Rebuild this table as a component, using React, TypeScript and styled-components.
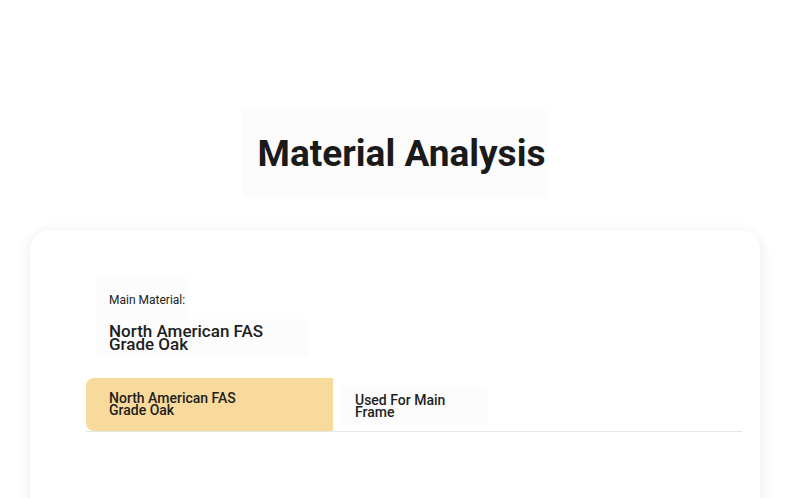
import styled, { createGlobalStyle } from "styled-components";

const Global = createGlobalStyle`
  html, body { margin: 0; padding: 0; background: #fff; }
  body { font-family: Roboto, "Liberation Sans", sans-serif; color: #1a1a1a; }
`;

const Page = styled.div`
  width: 790px;
  height: 498px;
  overflow: hidden;
  padding-top: 110px;
  box-sizing: border-box;
`;

const TitleWrap = styled.div`
  display: flex;
  justify-content: center;
`;

const Title = styled.h1`
  margin: 0;
  padding: 21px 3px 21px 16px;
  background: #fcfcfc;
  font-size: 37px;
  font-weight: 700;
  line-height: 46px;
  color: #1a1a1a;
`;

const Card = styled.div`
  margin: 32px 30px 0;
  background: #fff;
  border-radius: 20px;
  box-shadow: 0 2px 14px rgba(0, 0, 0, 0.09);
  padding: 47px 18px 120px 56px;
`;

const Info = styled.div`
  display: flex;
  flex-direction: column;
  align-items: flex-start;
  margin-left: 10px;
`;

const Label = styled.div`
  background: #fcfcfc;
  padding: 16px 2px 11px 13px;
  font-size: 12px;
  line-height: 14px;
  color: #222;
`;

const Value = styled.div`
  background: #fcfcfc;
  margin-top: 1px;
  padding: 6px 30px 5px 13px;
  font-size: 17px;
  font-weight: 500;
  line-height: 13px;
  width: 170px;
  color: #1e1e1e;
`;

const Row = styled.div`
  margin-top: 22px;
  display: flex;
  border-bottom: 1px solid #e6e6e6;
  height: 53px;
`;

const Cell = styled.div<{ highlight?: boolean; w: string }>`
  width: ${({ w }) => w};
  background: ${({ highlight }) => (highlight ? "#f8da9c" : "transparent")};
  border-radius: ${({ highlight }) => (highlight ? "8px 0 0 8px" : "0")};
  display: flex;
  align-items: center;
  padding-left: ${({ highlight }) => (highlight ? "23px" : "8px")};
  box-sizing: border-box;
`;

const CellText = styled.div<{ boxed?: boolean; offset?: string }>`
  font-size: 14px;
  font-weight: 500;
  line-height: 12px;
  color: #1e1e1e;
  width: ${({ boxed }) => (boxed ? "110px" : "140px")};
  background: ${({ boxed }) => (boxed ? "#fcfcfc" : "transparent")};
  padding: ${({ boxed }) => (boxed ? "8px 22px 6px 14px" : "0")};
  margin-top: ${({ offset }) => offset ?? "0"};
`;

export default function App() {
  return (
    <>
      <Global />
      <Page>
        <TitleWrap>
          <Title>Material Analysis</Title>
        </TitleWrap>
        <Card>
          <Info>
            <Label>Main Material:</Label>
            <Value>North American FAS Grade Oak</Value>
          </Info>
          <Row>
            <Cell highlight w="247px">
              <CellText offset="-2px">North American FAS Grade Oak</CellText>
            </Cell>
            <Cell w="200px">
              <CellText boxed offset="0px">Used For Main Frame</CellText>
            </Cell>
          </Row>
        </Card>
      </Page>
    </>
  );
}
